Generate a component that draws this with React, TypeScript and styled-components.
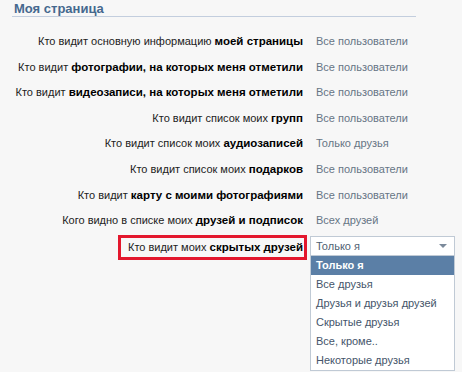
import React, { useState } from "react";
import styled, { createGlobalStyle } from "styled-components";

const GlobalStyle = createGlobalStyle`
  html, body {
    margin: 0;
    padding: 0;
    background: #f7f7f7;
  }
  body {
    font-family: "Liberation Sans", Arial, sans-serif;
    font-size: 11px;
    color: #000;
  }
`;

const SRoot = styled.div`
  width: 462px;
  height: 372px;
  overflow: hidden;
`;

const SHeader = styled.div`
  margin: 0 46px 0 12px;
  padding: 2px 0 1px 2px;
  border-bottom: 1px solid #c3cede;
  font-weight: bold;
  font-size: 13px;
  color: #45688e;
  line-height: 13px;
`;

const SGrid = styled.div`
  display: grid;
  grid-template-columns: 307px 145px;
  column-gap: 3px;
  padding-top: 12px;
`;

const SLabel = styled.div<{ $marked?: boolean }>`
  justify-self: end;
  height: 25.6px;
  line-height: 25.6px;
  box-sizing: border-box;
  padding-right: 4px;
  white-space: nowrap;
  text-align: right;
  color: #222;
  ${(p) =>
    p.$marked &&
    `
    height: 25px;
    line-height: 19px;
    margin-top: 1px;
    border: 3px solid #e3172d;
    padding: 0 1px 0 7px;
  `}

  b {
    color: #000;
    font-size: 11.5px;
  }
`;

const SValue = styled.div`
  height: 25.6px;
  line-height: 25.6px;
  padding-left: 6px;
  color: #667585;
  white-space: nowrap;
`;

const SSelectWrap = styled.div`
  position: relative;
  margin-top: 2px;
`;

const SSelect = styled.div`
  height: 20px;
  box-sizing: border-box;
  border: 1px solid #c0cad5;
  background: #fff;
  display: flex;
  align-items: center;
  padding: 0 6px 0 5px;
  color: #4f5f72;
  justify-content: space-between;
`;

const SArrow = styled.span`
  width: 0;
  height: 0;
  border-left: 4px solid transparent;
  border-right: 4px solid transparent;
  border-top: 4px solid #7b8a9b;
  margin-right: 1px;
`;

const SList = styled.ul`
  position: absolute;
  left: 0;
  top: 20px;
  width: 145px;
  margin: 0;
  padding: 0;
  list-style: none;
  box-sizing: border-box;
  border: 1px solid #c0cad5;
  border-top: none;
  background: #fff;
`;

const SItem = styled.li<{ $active?: boolean }>`
  height: 19px;
  line-height: 19px;
  padding-left: 5px;
  color: ${(p) => (p.$active ? "#fff" : "#45556a")};
  background: ${(p) => (p.$active ? "#5b7fa6" : "transparent")};
  font-weight: ${(p) => (p.$active ? "bold" : "normal")};
  white-space: nowrap;
`;

const rows: { pre: string; bold: string; value: string }[] = [
  { pre: "Кто видит основную информацию ", bold: "моей страницы", value: "Все пользователи" },
  { pre: "Кто видит ", bold: "фотографии, на которых меня отметили", value: "Все пользователи" },
  { pre: "Кто видит ", bold: "видеозаписи, на которых меня отметили", value: "Все пользователи" },
  { pre: "Кто видит список моих ", bold: "групп", value: "Все пользователи" },
  { pre: "Кто видит список моих ", bold: "аудиозаписей", value: "Только друзья" },
  { pre: "Кто видит список моих ", bold: "подарков", value: "Все пользователи" },
  { pre: "Кто видит ", bold: "карту с моими фотографиями", value: "Все пользователи" },
  { pre: "Кого видно в списке моих ", bold: "друзей и подписок", value: "Всех друзей" },
];

const options = [
  "Только я",
  "Все друзья",
  "Друзья и друзья друзей",
  "Скрытые друзья",
  "Все, кроме..",
  "Некоторые друзья",
];

const App = () => {
  const [selected, setSelected] = useState(0);

  return (
    <SRoot>
      <GlobalStyle />
      <SHeader>Моя страница</SHeader>
      <SGrid>
        {rows.map((r) => (
          <React.Fragment key={r.bold}>
            <SLabel>
              {r.pre}
              <b>{r.bold}</b>
            </SLabel>
            <SValue>{r.value}</SValue>
          </React.Fragment>
        ))}
        <SLabel $marked>
          Кто видит моих <b>скрытых друзей</b>
        </SLabel>
        <SSelectWrap>
          <SSelect>
            {options[selected]}
            <SArrow />
          </SSelect>
          <SList>
            {options.map((o, i) => (
              <SItem key={o} $active={i === selected} onClick={() => setSelected(i)}>
                {o}
              </SItem>
            ))}
          </SList>
        </SSelectWrap>
      </SGrid>
    </SRoot>
  );
};

export default App;
